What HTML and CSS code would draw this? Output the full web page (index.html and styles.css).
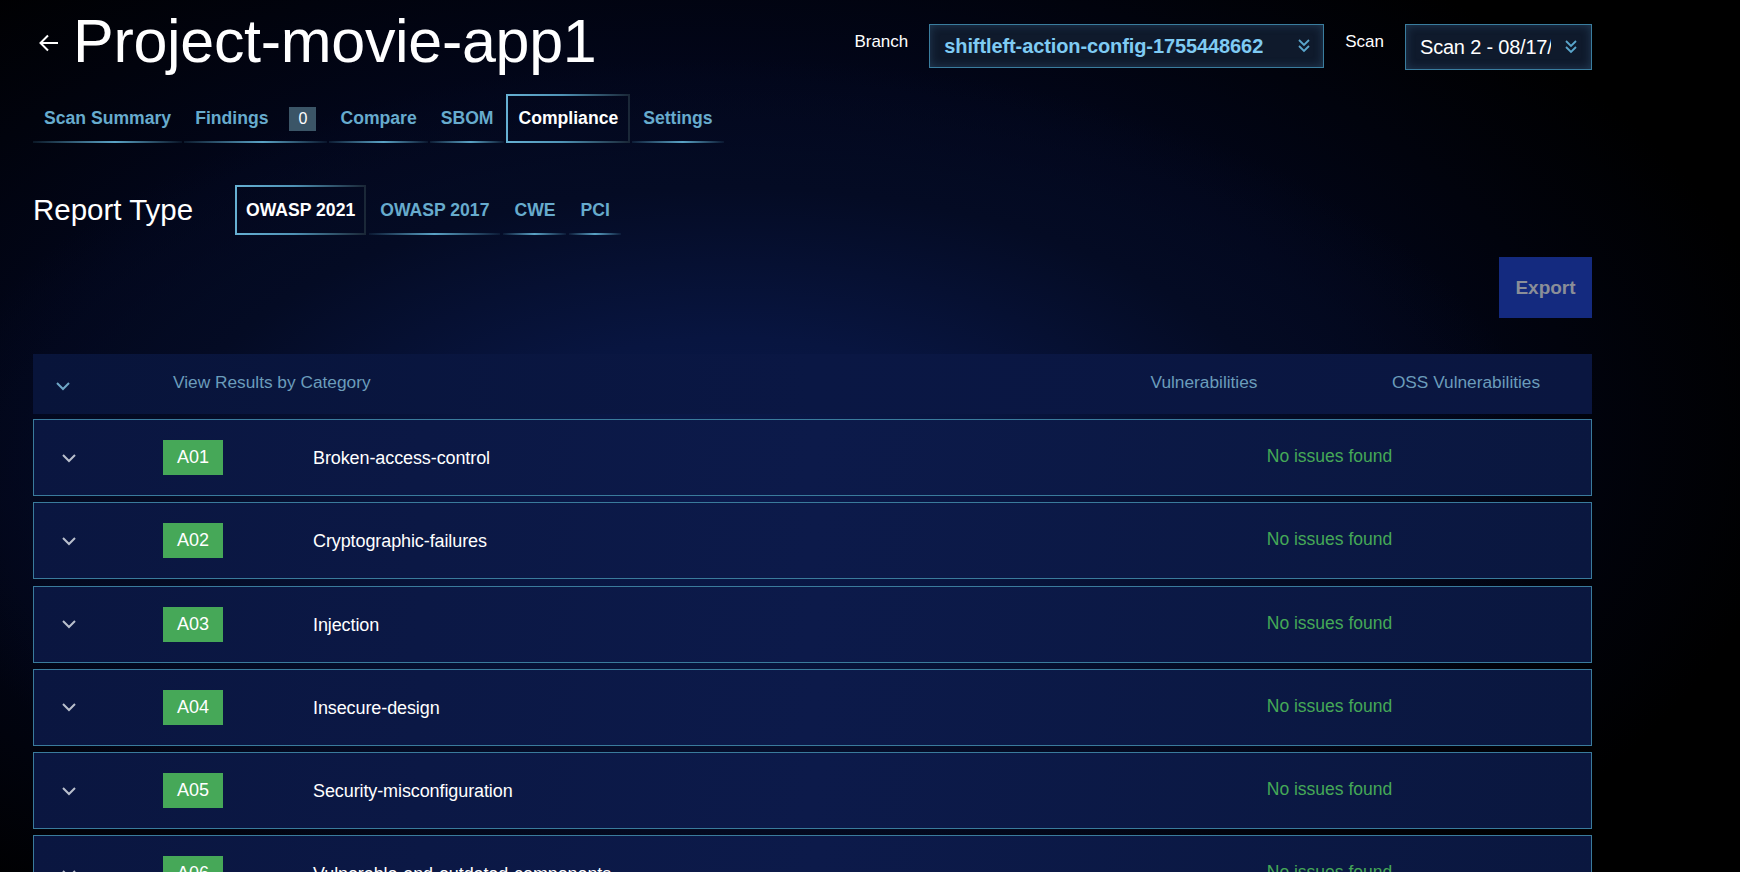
FILE: index.html
```html
<!DOCTYPE html>
<html lang="en">
<head>
<meta charset="utf-8">
<title>Project-movie-app1 – Compliance</title>
<link rel="stylesheet" href="styles.css">
</head>
<body>
<div class="page">
  <header class="topbar">
    <div class="title-group">
      <svg class="back" width="20" height="18" viewBox="0 0 20 18" aria-hidden="true">
        <path d="M19 9H2M9 1.5L1.5 9L9 16.5" fill="none" stroke="#ffffff" stroke-width="2"/>
      </svg>
      <h1 class="title">Project-movie-app1</h1>
    </div>
    <div class="controls">
      <span class="ctl-label">Branch</span>
      <div class="select select-branch">
        <span class="select-text branch-text">shiftleft-action-config-1755448662</span>
        <svg class="dbl" width="14" height="16" viewBox="0 0 14 16" aria-hidden="true">
          <path d="M2 2L7 7L12 2M2 8L7 13L12 8" fill="none" stroke="#5aa6cc" stroke-width="1.8"/>
        </svg>
      </div>
      <span class="ctl-label">Scan</span>
      <div class="select select-scan">
        <span class="select-text scan-text">Scan 2 - 08/17/2025 10:42</span>
        <svg class="dbl" width="14" height="16" viewBox="0 0 14 16" aria-hidden="true">
          <path d="M2 2L7 7L12 2M2 8L7 13L12 8" fill="none" stroke="#5aa6cc" stroke-width="1.8"/>
        </svg>
      </div>
    </div>
  </header>

  <nav class="tabs">
    <a class="tab">Scan Summary</a>
    <a class="tab">Findings <span class="count">0</span></a>
    <a class="tab">Compare</a>
    <a class="tab">SBOM</a>
    <a class="tab active">Compliance</a>
    <a class="tab">Settings</a>
  </nav>

  <section class="report-row">
    <h2 class="report-title">Report Type</h2>
    <div class="rtabs">
      <a class="rtab active">OWASP 2021</a>
      <a class="rtab">OWASP 2017</a>
      <a class="rtab">CWE</a>
      <a class="rtab">PCI</a>
    </div>
  </section>

  <div class="export-row">
    <button class="export">Export</button>
  </div>

  <section class="table">
    <div class="thead">
      <svg class="chev head-chev" width="16" height="10" viewBox="0 0 16 10" aria-hidden="true">
        <path d="M2 2L8 8L14 2" fill="none" stroke="#6ea6c6" stroke-width="2"/>
      </svg>
      <span class="th-cat">View Results by Category</span>
      <span class="th-col th-vuln">Vulnerabilities</span>
      <span class="th-col th-oss">OSS Vulnerabilities</span>
    </div>

    <div class="trow">
      <svg class="chev" width="16" height="10" viewBox="0 0 16 10" aria-hidden="true"><path d="M2 2L8 8L14 2" fill="none" stroke="#b9bfcc" stroke-width="2"/></svg>
      <span class="badge">A01</span>
      <span class="name">Broken-access-control</span>
      <span class="status">No issues found</span>
    </div>
    <div class="trow">
      <svg class="chev" width="16" height="10" viewBox="0 0 16 10" aria-hidden="true"><path d="M2 2L8 8L14 2" fill="none" stroke="#b9bfcc" stroke-width="2"/></svg>
      <span class="badge">A02</span>
      <span class="name">Cryptographic-failures</span>
      <span class="status">No issues found</span>
    </div>
    <div class="trow">
      <svg class="chev" width="16" height="10" viewBox="0 0 16 10" aria-hidden="true"><path d="M2 2L8 8L14 2" fill="none" stroke="#b9bfcc" stroke-width="2"/></svg>
      <span class="badge">A03</span>
      <span class="name">Injection</span>
      <span class="status">No issues found</span>
    </div>
    <div class="trow">
      <svg class="chev" width="16" height="10" viewBox="0 0 16 10" aria-hidden="true"><path d="M2 2L8 8L14 2" fill="none" stroke="#b9bfcc" stroke-width="2"/></svg>
      <span class="badge">A04</span>
      <span class="name">Insecure-design</span>
      <span class="status">No issues found</span>
    </div>
    <div class="trow">
      <svg class="chev" width="16" height="10" viewBox="0 0 16 10" aria-hidden="true"><path d="M2 2L8 8L14 2" fill="none" stroke="#b9bfcc" stroke-width="2"/></svg>
      <span class="badge">A05</span>
      <span class="name">Security-misconfiguration</span>
      <span class="status">No issues found</span>
    </div>
    <div class="trow">
      <svg class="chev" width="16" height="10" viewBox="0 0 16 10" aria-hidden="true"><path d="M2 2L8 8L14 2" fill="none" stroke="#b9bfcc" stroke-width="2"/></svg>
      <span class="badge">A06</span>
      <span class="name">Vulnerable-and-outdated-components</span>
      <span class="status">No issues found</span>
    </div>
  </section>
</div>
</body>
</html>
```

FILE: styles.css
```css
html, body {
  margin: 0;
  padding: 0;
  height: 100%;
  overflow: hidden;
}

body {
  font-family: "Liberation Sans", Arial, sans-serif;
  color: #ffffff;
  background:
    radial-gradient(ellipse 820px 430px at 42% 56%, #0b1a4e 0%, #081540 35%, #040b24 70%, rgba(0,0,0,0) 100%),
    radial-gradient(ellipse 1100px 600px at 40% 50%, #050d2a 0%, #02061a 60%, #000 100%),
    #000;
}

.page {
  width: 1559px;
  padding-left: 33px;
}

/* ---------- top bar ---------- */
.topbar {
  display: flex;
  justify-content: space-between;
  align-items: flex-start;
  height: 94px;
}

.title-group {
  display: flex;
  align-items: center;
  padding-top: 11px;
}

.back {
  margin-left: 6px;
  margin-right: 14px;
  margin-top: 2px;
}

.title {
  margin: 0;
  font-size: 61px;
  font-weight: 400;
  line-height: 61px;
  letter-spacing: -0.3px;
}

.controls {
  display: flex;
  align-items: flex-start;
  padding-top: 24px;
}

.ctl-label {
  font-size: 17px;
  line-height: 20px;
  padding-top: 8px;
  margin-right: 21px;
}

.select {
  display: flex;
  align-items: center;
  justify-content: space-between;
  box-sizing: border-box;
  border: 1px solid #3a7d9e;
  background: #0f1a2c;
  box-shadow: inset 0 0 10px rgba(70, 120, 160, 0.35);
}

.select-branch {
  width: 395px;
  height: 44px;
  padding: 0 12px 0 14px;
  margin-right: 21px;
}

.select-scan {
  width: 187px;
  height: 46px;
  padding: 0 13px 0 14px;
}

.select-text {
  white-space: nowrap;
  overflow: hidden;
  font-size: 20px;
  line-height: 24px;
}

.branch-text {
  color: #7fcbf3;
  font-weight: 700;
  letter-spacing: -0.1px;
}

.scan-text {
  width: 131px;
  color: #ffffff;
  letter-spacing: -0.2px;
}

.dbl {
  flex: none;
}

/* ---------- tabs ---------- */
.tabs {
  display: flex;
  gap: 2px;
  height: 49px;
}

.tab {
  display: flex;
  align-items: center;
  box-sizing: border-box;
  height: 49px;
  padding: 0 11px;
  font-size: 17.6px;
  font-weight: 700;
  color: #67abcd;
  background: linear-gradient(90deg, rgba(70,140,175,0.15) 0%, #5aa3c6 55%, rgba(70,140,175,0.1) 100%) left bottom / 100% 2px no-repeat;
}

.tab.active {
  color: #ffffff;
  background: none;
  border: 2px solid;
  border-image: linear-gradient(90deg, #66b0d3 0%, #4f93b6 45%, #1a2737 100%) 1;
  padding: 0 10px;
}

.count {
  display: inline-flex;
  align-items: center;
  justify-content: center;
  width: 27px;
  height: 24px;
  margin-left: 21px;
  background: #3b5567;
  color: #ffffff;
  font-size: 16px;
  font-weight: 400;
}

/* ---------- report type ---------- */
.report-row {
  display: flex;
  align-items: center;
  margin-top: 42px;
  height: 50px;
}

.report-title {
  margin: 0 40px 0 0;
  font-size: 29.5px;
  font-weight: 400;
  width: 162px;
  white-space: nowrap;
}

.rtabs {
  display: flex;
  gap: 3px;
}

.rtab {
  display: flex;
  align-items: center;
  box-sizing: border-box;
  height: 50px;
  padding: 0 11px;
  font-size: 17.6px;
  font-weight: 700;
  color: #67abcd;
  background: linear-gradient(90deg, rgba(70,140,175,0.1) 0%, #5aa3c6 50%, rgba(70,140,175,0.1) 100%) left bottom / 100% 2px no-repeat;
}

.rtab.active {
  color: #ffffff;
  background: none;
  border: 2px solid;
  border-image: linear-gradient(90deg, #66b0d3 0%, #4f93b6 45%, #1a2737 100%) 1;
  padding: 0 9px;
}

/* ---------- export ---------- */
.export-row {
  display: flex;
  justify-content: flex-end;
  margin-top: 22px;
}

.export {
  width: 93px;
  height: 61px;
  border: none;
  background: #142a7f;
  color: #8a8e98;
  font-family: "Liberation Sans", Arial, sans-serif;
  font-size: 19px;
  font-weight: 700;
  padding: 0;
}

/* ---------- table ---------- */
.table {
  margin-top: 36px;
  display: flex;
  flex-direction: column;
}

.thead {
  display: flex;
  align-items: center;
  height: 60px;
  background: linear-gradient(90deg, #08143a 0%, #0a1744 50%, #0a1640 100%);
  padding-left: 22px;
}

.chev {
  flex: none;
}

.head-chev {
  margin-top: 4px;
}

.th-cat {
  flex: 1;
  margin-left: 102px;
  font-size: 17.3px;
  color: #6b9cbb;
  margin-top: -4px;
}

.th-col {
  font-size: 17.3px;
  color: #6b9cbb;
  text-align: center;
  margin-top: -4px;
}

.th-vuln { width: 272px; }
.th-oss { width: 252px; }

.trow {
  display: flex;
  align-items: center;
  box-sizing: border-box;
  height: 77px;
  margin-top: 6.3px;
  border: 1px solid #3a7b9c;
  background: linear-gradient(100deg, #0a1640 0%, #0c1a4a 50%, #0a173f 100%);
  padding-left: 27px;
}

.thead + .trow {
  margin-top: 5px;
}

.badge {
  flex: none;
  display: flex;
  align-items: center;
  justify-content: center;
  width: 60px;
  height: 35px;
  margin-left: 86px;
  background: #46a858;
  color: #ffffff;
  font-size: 18px;
}

.name {
  flex: 1;
  margin-left: 90px;
  font-size: 18px;
  color: #ffffff;
  letter-spacing: -0.1px;
  margin-top: 2px;
}

.status {
  width: 523px;
  text-align: center;
  font-size: 17.5px;
  color: #45a857;
  margin-top: -2px;
}
```
